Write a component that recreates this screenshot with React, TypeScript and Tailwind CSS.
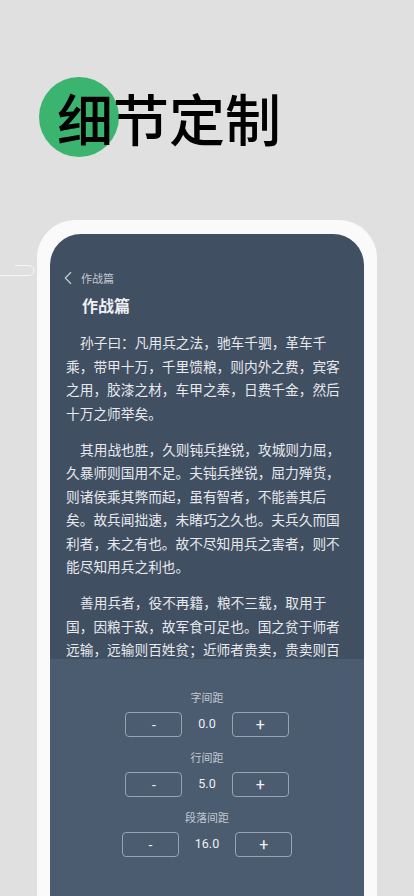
import { ChevronLeft } from 'lucide-react'

const CJK = { fontFamily: '"Noto Sans CJK SC", "Noto Sans", sans-serif' }
const NUM = { fontFamily: 'Roboto, "Noto Sans CJK SC", sans-serif' }

const PARAGRAPHS: string[][] = [
  [
    '孙子曰：凡用兵之法，驰车千驷，革车千',
    '乘，带甲十万，千里馈粮，则内外之费，宾客',
    '之用，胶漆之材，车甲之奉，日费千金，然后',
    '十万之师举矣。',
  ],
  [
    '其用战也胜，久则钝兵挫锐，攻城则力屈，',
    '久暴师则国用不足。夫钝兵挫锐，屈力殚货，',
    '则诸侯乘其弊而起，虽有智者，不能善其后',
    '矣。故兵闻拙速，未睹巧之久也。夫兵久而国',
    '利者，未之有也。故不尽知用兵之害者，则不',
    '能尽知用兵之利也。',
  ],
  [
    '善用兵者，役不再籍，粮不三载，取用于',
    '国，因粮于敌，故军食可足也。国之贫于师者',
    '远输，远输则百姓贫；近师者贵卖，贵卖则百',
  ],
]

const SETTINGS = [
  { label: '字间距', value: '0.0' },
  { label: '行间距', value: '5.0' },
  { label: '段落间距', value: '16.0' },
]

function Stepper({ label, value }: { label: string; value: string }) {
  return (
    <div className="flex flex-col items-center">
      <div className="mb-[7px] h-4 text-[11px] leading-4 text-[#c3c9d1]" style={CJK}>
        {label}
      </div>
      <div className="flex items-center gap-4">
        <button className="flex h-[25px] w-[57px] items-center justify-center rounded-[4px] border border-[#9aa4b1] text-[14px] leading-none text-[#eef0f3]" style={NUM}>
          -
        </button>
        <span className="text-[12.5px] text-[#eef0f3]" style={NUM}>
          {value}
        </span>
        <button className="flex h-[25px] w-[57px] items-center justify-center rounded-[4px] border border-[#9aa4b1] text-[16px] leading-none text-[#eef0f3]" style={NUM}>
          +
        </button>
      </div>
    </div>
  )
}

export default function App() {
  return (
    <div className="relative flex h-[896px] w-[414px] flex-col overflow-hidden bg-[#e0e0e0]">
      {/* header */}
      <div className="relative h-[220px] shrink-0">
        <div className="absolute left-[39px] top-[77px] h-[80px] w-[80px] rounded-full bg-[#3ab46e]" />
        <h1
          className="relative pl-[57px] pt-[89px] text-[56px] font-medium leading-[56px] text-black"
          style={CJK}
        >
          细节定制
        </h1>
        <svg className="absolute left-0 top-[262px]" width="36" height="16" viewBox="0 0 36 16" fill="none">
          <path d="M0 13.5 H29 A5 5 0 0 0 29 3.5 H15" stroke="#f7f7f7" strokeWidth="1" />
        </svg>
      </div>

      {/* phone */}
      <div className="ml-[37px] flex w-[340px] flex-1 flex-col rounded-t-[38px] bg-[#fafafa] px-[13px] pt-[14px]">
        <div className="flex flex-1 flex-col overflow-hidden rounded-t-[31px] bg-[#414f63]">
          <div className="flex h-[425px] shrink-0 flex-col overflow-hidden px-4 pt-[34px]">
            <div className="flex h-5 items-center gap-[2px]">
              <ChevronLeft className="-ml-[9px] h-[22px] w-[22px] text-[#c9ced5]" strokeWidth={1.2} />
              <span className="text-[11px] text-[#c3c8cf]" style={CJK}>
                作战篇
              </span>
            </div>
            <div className="mt-[7px] pl-[16px] text-[16px] font-bold leading-5 text-[#eef0f3]" style={CJK}>
              作战篇
            </div>
            <div className="mt-4 flex flex-col gap-[12.5px]">
              {PARAGRAPHS.map((lines, i) => (
                <p key={i} className="text-[13.7px] leading-[23.5px] text-[#e7e9ec]" style={CJK}>
                  {lines.map((line, j) => (
                    <span key={j} className={`block whitespace-nowrap ${j === 0 ? 'pl-[14px]' : ''}`}>
                      {line}
                    </span>
                  ))}
                </p>
              ))}
            </div>
          </div>

          <div className="flex flex-1 flex-col items-center gap-[12px] bg-[#4b5b70] pt-[30px]">
            {SETTINGS.map((s) => (
              <Stepper key={s.label} label={s.label} value={s.value} />
            ))}
          </div>
        </div>
      </div>
    </div>
  )
}
